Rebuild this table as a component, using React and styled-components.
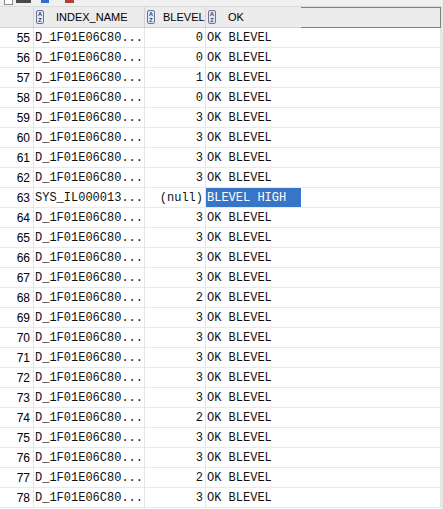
import React from 'react';
import styled, { createGlobalStyle } from 'styled-components';

const GlobalStyle = createGlobalStyle`
    html, body {
        margin: 0;
        padding: 0;
        background: #ffffff;
    }
`

const COLS = '34px 111px 61px 95px 140px';

const Page = styled.div`
    width: 443px;
    height: 509px;
    overflow: hidden;
    display: flex;
    flex-direction: column;
    background: #ffffff;
    font-family: "Liberation Sans", Arial, sans-serif;
`

const Toolbar = styled.div`
    height: 7px;
    flex: none;
    background: #f0f0f0;
    border-bottom: 1px solid #dadada;
    box-sizing: border-box;
    display: flex;
    align-items: flex-start;
`

const ToolBit = styled.div`
    margin-left: ${props => props.left}px;
    width: ${props => props.w}px;
    height: ${props => props.h || 3}px;
    background: ${props => props.color};
    border: ${props => props.border || 'none'};
    border-top: none;
    box-sizing: border-box;
`

const Body = styled.div`
    flex: 1;
    display: flex;
    min-height: 0;
`

const Table = styled.div`
    width: 441px;
    display: flex;
    flex-direction: column;
`

const Strip = styled.div`
    width: 2px;
    background: #e8e8e8;
`

const HeaderRow = styled.div`
    display: grid;
    grid-template-columns: ${COLS};
    height: 21px;
    background: #ececec;
    box-sizing: border-box;
    border-bottom: 1px solid #d0d0d0;
`

const HeaderCell = styled.div`
    display: flex;
    align-items: center;
    padding-left: 2px;
    box-sizing: border-box;
    border-right: ${props => props.last ? 'none' : '1px solid #d4d4d4'};
    font-size: 11px;
    color: #000;
`

const HeaderLabel = styled.span`
    margin-left: ${props => props.ml}px;
    white-space: nowrap;
`

const Filler = styled.div`
    background: #ececec;
    border: 1px solid #808080;
    border-left: none;
    margin-bottom: -1px;
    box-sizing: border-box;
`

const Row = styled.div`
    display: grid;
    grid-template-columns: ${COLS};
    height: 20px;
`

const Cell = styled.div`
    box-sizing: border-box;
    border-right: ${props => props.open ? 'none' : '1px solid #e4e4e4'};
    border-bottom: 1px solid #e9e9e9;
    display: flex;
    align-items: center;
    justify-content: ${props => props.right ? 'flex-end' : 'flex-start'};
    padding: ${props => props.right ? '0 2px 0 0' : '0 0 0 1px'};
    font-family: "Liberation Mono", "Courier New", monospace;
    font-size: 12px;
    color: #111;
    white-space: nowrap;
    overflow: hidden;
    background: ${props => props.selected ? '#3875c8' : 'transparent'};
    ${props => props.selected && 'color: #ffffff;'}
`

const NumCell = styled(Cell)`
    font-family: "Liberation Sans", Arial, sans-serif;
    justify-content: flex-end;
    padding-right: 3px;
    color: #000;
`

function SortIcon() {
    return (
        <svg width="8" height="14" viewBox="0 0 8 14">
            <rect x="0.5" y="0.5" width="7" height="13" rx="1.5" fill="#dfe6f4" stroke="#6d7390" />
            <text x="4" y="6.3" fontSize="5.5" fontFamily="Liberation Sans, Arial, sans-serif" fontWeight="bold" fill="#2b3a70" textAnchor="middle">A</text>
            <text x="4" y="12" fontSize="5.5" fontFamily="Liberation Sans, Arial, sans-serif" fontWeight="bold" fill="#2b3a70" textAnchor="middle">Z</text>
        </svg>
    )
}

const rows = [
    [55, 'D_1F01E06C80...', '0', 'OK BLEVEL'],
    [56, 'D_1F01E06C80...', '0', 'OK BLEVEL'],
    [57, 'D_1F01E06C80...', '1', 'OK BLEVEL'],
    [58, 'D_1F01E06C80...', '0', 'OK BLEVEL'],
    [59, 'D_1F01E06C80...', '3', 'OK BLEVEL'],
    [60, 'D_1F01E06C80...', '3', 'OK BLEVEL'],
    [61, 'D_1F01E06C80...', '3', 'OK BLEVEL'],
    [62, 'D_1F01E06C80...', '3', 'OK BLEVEL'],
    [63, 'SYS_IL000013...', '(null)', 'BLEVEL HIGH'],
    [64, 'D_1F01E06C80...', '3', 'OK BLEVEL'],
    [65, 'D_1F01E06C80...', '3', 'OK BLEVEL'],
    [66, 'D_1F01E06C80...', '3', 'OK BLEVEL'],
    [67, 'D_1F01E06C80...', '3', 'OK BLEVEL'],
    [68, 'D_1F01E06C80...', '2', 'OK BLEVEL'],
    [69, 'D_1F01E06C80...', '3', 'OK BLEVEL'],
    [70, 'D_1F01E06C80...', '3', 'OK BLEVEL'],
    [71, 'D_1F01E06C80...', '3', 'OK BLEVEL'],
    [72, 'D_1F01E06C80...', '3', 'OK BLEVEL'],
    [73, 'D_1F01E06C80...', '3', 'OK BLEVEL'],
    [74, 'D_1F01E06C80...', '2', 'OK BLEVEL'],
    [75, 'D_1F01E06C80...', '3', 'OK BLEVEL'],
    [76, 'D_1F01E06C80...', '3', 'OK BLEVEL'],
    [77, 'D_1F01E06C80...', '2', 'OK BLEVEL'],
    [78, 'D_1F01E06C80...', '3', 'OK BLEVEL'],
];

export default function App() {
    return (
        <Page>
            <GlobalStyle />
            <Toolbar>
                <ToolBit left={4} w={9} h={5} color="#ffffff" border="1px solid #8a8a8a" />
                <ToolBit left={3} w={15} color="#4a4a4a" />
                <ToolBit left={10} w={8} color="#2f6fd0" />
                <ToolBit left={16} w={9} color="#b04030" />
            </Toolbar>
            <Body>
                <Table>
                    <HeaderRow>
                        <HeaderCell />
                        <HeaderCell><SortIcon /><HeaderLabel ml={12}>INDEX_NAME</HeaderLabel></HeaderCell>
                        <HeaderCell><SortIcon /><HeaderLabel ml={8}>BLEVEL</HeaderLabel></HeaderCell>
                        <HeaderCell last><SortIcon /><HeaderLabel ml={12}>OK</HeaderLabel></HeaderCell>
                        <Filler />
                    </HeaderRow>
                    {rows.map(([n, name, blevel, ok]) => (
                        <Row key={n}>
                            <NumCell>{n}</NumCell>
                            <Cell>{name}</Cell>
                            <Cell right>{blevel}</Cell>
                            <Cell open selected={ok === 'BLEVEL HIGH'}>{ok}</Cell>
                            <Cell />
                        </Row>
                    ))}
                </Table>
                <Strip />
            </Body>
        </Page>
    )
}
